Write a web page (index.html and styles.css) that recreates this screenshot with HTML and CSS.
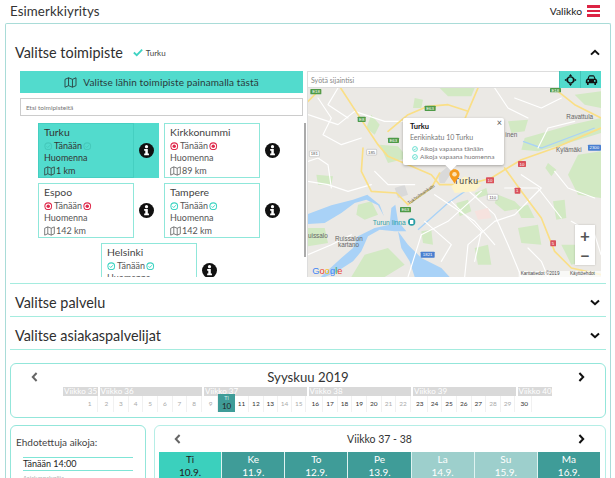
FILE: index.html
```html
<!DOCTYPE html>
<html lang="fi">
<head>
<meta charset="utf-8">
<title>Esimerkkiyritys</title>
<link rel="stylesheet" href="styles.css">
</head>
<body>
<svg class="defs" width="0" height="0" aria-hidden="true">
  <defs>
    <symbol id="map-i" viewBox="0 0 16 14"><path d="M1 3 5.500 1 10.500 3 15 1V11L10.500 13 5.500 11 1 13ZM5.500 1V11M10.500 3V13" fill="none" stroke="currentColor" stroke-width="1.100" stroke-linejoin="round"/></symbol>
    <symbol id="ok" viewBox="0 0 12 12"><circle cx="6" cy="6" r="4.800" fill="none" stroke="currentColor" stroke-width="1.500"/><path d="M3.600 6.100 5.300 7.800 8.400 4.500" fill="none" stroke="currentColor" stroke-width="1.400"/></symbol>
    <symbol id="no" viewBox="0 0 12 12"><circle cx="6" cy="6" r="4.800" fill="none" stroke="currentColor" stroke-width="1.500"/><circle cx="6" cy="6" r="2.400" fill="currentColor"/></symbol>
    <symbol id="info" viewBox="0 0 16 16"><circle cx="8" cy="8" r="8" fill="#111"/><circle cx="8" cy="3.900" r="1.700" fill="#fff"/><path d="M5.500 6.500H9.400V11.300H10.600V13H5.500V11.300H6.700V8.200H5.500Z" fill="#fff"/></symbol>
    <symbol id="chev-up" viewBox="0 0 10 7"><path d="M1 5.600 5 1.800 9 5.600" fill="none" stroke="currentColor" stroke-width="2"/></symbol>
    <symbol id="chev-down" viewBox="0 0 10 7"><path d="M1 1.400 5 5.200 9 1.400" fill="none" stroke="currentColor" stroke-width="2"/></symbol>
    <symbol id="chev-left" viewBox="0 0 7 10"><path d="M5.600 1 1.800 5 5.600 9" fill="none" stroke="currentColor" stroke-width="2"/></symbol>
    <symbol id="chev-right" viewBox="0 0 7 10"><path d="M1.400 1 5.200 5 1.400 9" fill="none" stroke="currentColor" stroke-width="2"/></symbol>
  </defs>
</svg>

<header class="topbar">
  <span class="brand">Esimerkkiyritys</span>
  <span class="menu">Valikko<span class="burger"><i></i><i></i><i></i></span></span>
</header>

<main class="frame">
  <section class="sec-open">
    <div class="sec-head">
      <h2>Valitse toimipiste</h2>
      <svg class="check" viewBox="0 0 12 10"><path d="M1 5 4.500 8.200 11 1.500" fill="none" stroke="#3fd3c3" stroke-width="2.200"/></svg>
      <span class="picked">Turku</span>
      <svg class="chev"><use href="#chev-up"/></svg>
    </div>
    <div class="picker">
      <div class="left">
        <div class="nearest"><svg class="nearest-i"><use href="#map-i"/></svg>Valitse lähin toimipiste painamalla tästä</div>
        <div class="search">Etsi toimipisteitä</div>
        <div class="list">
          <div class="loc selected">
            <div class="card"><b>Turku</b><p><svg class="st dim"><use href="#ok"/></svg><span>Tänään</span><svg class="st dim"><use href="#ok"/></svg></p><p>Huomenna</p><p><svg class="mp"><use href="#map-i"/></svg>1 km</p></div>
            <div class="info"><svg><use href="#info"/></svg></div>
          </div>
          <div class="loc">
            <div class="card"><b>Kirkkonummi</b><p><svg class="st red"><use href="#no"/></svg><span>Tänään</span><svg class="st red"><use href="#no"/></svg></p><p>Huomenna</p><p><svg class="mp"><use href="#map-i"/></svg>89 km</p></div>
            <div class="info"><svg><use href="#info"/></svg></div>
          </div>
          <div class="loc">
            <div class="card"><b>Espoo</b><p><svg class="st red"><use href="#no"/></svg><span>Tänään</span><svg class="st red"><use href="#no"/></svg></p><p>Huomenna</p><p><svg class="mp"><use href="#map-i"/></svg>142 km</p></div>
            <div class="info"><svg><use href="#info"/></svg></div>
          </div>
          <div class="loc">
            <div class="card"><b>Tampere</b><p><svg class="st grn"><use href="#ok"/></svg><span>Tänään</span><svg class="st grn"><use href="#ok"/></svg></p><p>Huomenna</p><p><svg class="mp"><use href="#map-i"/></svg>142 km</p></div>
            <div class="info"><svg><use href="#info"/></svg></div>
          </div>
          <div class="loc last">
            <div class="card"><b>Helsinki</b><p><svg class="st grn"><use href="#ok"/></svg><span>Tänään</span><svg class="st grn"><use href="#ok"/></svg></p><p>Huomenna</p><p><svg class="mp"><use href="#map-i"/></svg>142 km</p></div>
            <div class="info"><svg><use href="#info"/></svg></div>
          </div>
        </div>
      </div>
      <div class="scrollbar"></div>
      <div class="right">
        <div class="mapbar">
          <span class="addr">Syötä sijaintisi</span>
          <span class="mapbtn"><svg viewBox="0 0 14 14"><circle cx="7" cy="7" r="3.600" fill="none" stroke="#111" stroke-width="1.600"/><path d="M7 0 9 2.500H5ZM7 14 5 11.500H9ZM0 7 2.500 5V9ZM14 7 11.500 9V5Z" fill="#111"/></svg></span>
          <span class="mapbtn"><svg viewBox="0 0 16 14"><path d="M3 5.500 4.500 2Q4.800 1 6 1H10Q11.200 1 11.500 2L13 5.500Q15 6 15 8V11H13.500V13H11.500V11H4.500V13H2.500V11H1V8Q1 6 3 5.500Z" fill="#111"/><path d="M4.500 5.500 5.500 2.800H10.500L11.500 5.500Z" fill="#52dbcd"/><circle cx="4" cy="8.200" r="1.100" fill="#52dbcd"/><circle cx="12" cy="8.200" r="1.100" fill="#52dbcd"/></svg></span>
        </div>
        <div class="map">
          <svg class="mapart" viewBox="0 0 879 567" preserveAspectRatio="none">
            <rect width="879" height="567" fill="#ebe9e5"/>
            <g fill="#d2e9c3">
              <path d="M320 30 345 35 340 60 315 60Z"/>
              <path d="M395 0H500L490 25 420 25Z"/>
              <path d="M190 80 215 110 200 140 175 120Z"/>
              <path d="M215 170 270 175 300 210 240 225Z"/>
              <path d="M600 100 660 95 650 130 610 135Z"/>
              <path d="M650 150 790 110 879 90V135L780 165 690 190 640 185Z"/>
              <path d="M800 20 879 10V60L830 50Z"/>
              <path d="M720 225 745 245 730 265 712 240Z"/>
              <path d="M810 200 879 190V330L810 320 780 260Z"/>
              <path d="M570 320 620 340 640 360 590 370 560 345Z"/>
              <path d="M150 350 190 340 210 380 170 395 145 380Z"/>
              <path d="M445 345 480 335 490 370 455 385Z"/>
              <path d="M500 315 535 300 540 320 510 330Z"/>
              <path d="M630 420 690 410 700 470 640 465Z"/>
              <path d="M170 500 240 480 290 530 230 567H130Z"/>
              <path d="M0 420 50 420 60 465 0 475Z"/>
              <path d="M500 480 540 470 550 530 510 530Z"/>
              <path d="M625 360 660 350 680 390 640 390Z"/>
              <path d="M735 340 770 335 775 390 745 395Z"/>
              <path d="M25 260 75 265 70 290 30 290Z"/>
              <path d="M340 430 370 425 375 470 345 465Z"/>
              <path d="M760 470 800 470 830 520 790 530Z"/>
            </g>
            <path d="M390 260 420 235 440 240 410 285 395 285ZM260 300 290 290 300 320 270 330Z" fill="#d9d9d9"/>
            <g fill="#a9d2f7">
              <path d="M0 378 70 352 135 335 178 320 215 350 228 385 210 352 175 335 140 345 100 375 50 405 0 408Z"/>
              <path d="M250 360 262 350 270 400 295 430 260 430 215 425 180 445 160 490 135 520 80 555 50 567H38L100 510 135 480 150 445 200 420 245 410Z"/>
              <path d="M270 430 300 470 340 510 400 540 425 567H320L305 520 280 480Z"/>
            </g>
            <path fill="none" stroke="#a9d2f7" stroke-width="4" d="M330 425 420 345 500 290M645 160 700 180 780 150 860 120"/>
            <g fill="none" stroke="#fff" stroke-width="3.500" stroke-linecap="round" stroke-linejoin="round">
              <path d="M0 80 90 110 140 70 230 100 300 100"/>
              <path d="M560 0 600 60 660 90M440 270 560 380 600 470 640 567"/>
              <path d="M520 310 420 400 340 440 300 567M590 300 690 300 760 390"/>
              <path d="M0 280 60 290 120 310 190 290M380 320 500 400 560 470"/>
              <path d="M800 100 720 120 690 180M0 220 30 210 60 230 70 300"/>
              <path d="M560 400 480 470 470 567M740 250 780 300 860 330"/>
              <path d="M90 0 60 50 120 90M660 480 700 520 720 567"/>
              <path d="M30 30 70 90 45 140 100 170 160 150M620 30 700 60 760 30"/>
              <path d="M430 340 520 430 500 520M350 400 430 470 400 520"/>
              <path d="M200 250 240 290 320 290M0 500 70 470 130 440"/>
              <path d="M640 260 700 300 620 380 560 400M790 400 860 440 879 500"/>
            </g>
            <g fill="none" stroke="#fadf86" stroke-width="5" stroke-linecap="round" stroke-linejoin="round">
              <path d="M98 0 150 80 210 170 240 205 300 230 370 260 395 290 440 290"/>
              <path d="M0 40 30 10"/>
              <path d="M240 130 300 80 360 55 420 50 480 70"/>
              <path d="M510 0 480 70 455 130"/>
              <path d="M165 180 160 250 190 310 265 315 300 350"/>
              <path d="M300 350 370 300 395 255"/>
              <path d="M460 295 550 270 640 215 740 180 879 120"/>
              <path d="M590 240 640 310 700 390 740 490 790 540 879 560"/>
              <path d="M750 10 800 50 879 90"/>
            </g>
            <path d="M430 295 470 265 520 290 500 310 440 315Z" fill="#fdf3c9"/>
            <path d="M500 370 540 360 550 390 510 395Z" fill="#f6e2de"/>
            <g fill="#4e9a47">
              <rect x="7" y="3" width="33" height="16" rx="2"/><rect x="149" y="86" width="24" height="16" rx="2"/><rect x="350" y="53" width="33" height="16" rx="2"/><rect x="240" y="149" width="33" height="16" rx="2"/><rect x="276" y="357" width="33" height="16" rx="2"/><rect x="726" y="0" width="33" height="13" rx="2"/>
            </g>
            <g font-family="'Liberation Sans',sans-serif" font-size="13" fill="#fff" text-anchor="middle">
              <text x="24" y="16">E18</text><text x="161" y="99">E8</text><text x="366" y="66">E63</text><text x="256" y="162">E63</text><text x="292" y="370">E63</text><text x="742" y="11">E18</text>
            </g>
            <g fill="#fff" stroke="#aaa" stroke-width="1.500"><rect x="176" y="184" width="30" height="17" rx="2"/><rect x="4" y="189" width="30" height="17" rx="2"/><rect x="538" y="319" width="32" height="17" rx="2"/></g>
            <g font-family="'Liberation Sans',sans-serif" font-size="13" fill="#555" text-anchor="middle"><text x="191" y="197">185</text><text x="19" y="202">181</text><text x="554" y="332">110</text></g>
            <g fill="#d9515c"><rect x="630" y="219" width="24" height="18" rx="2"/><rect x="534" y="268" width="24" height="18" rx="2"/><rect x="620" y="299" width="17" height="18" rx="2"/><rect x="727" y="457" width="17" height="18" rx="2"/></g>
            <g fill="#4a7fd0"><rect x="840" y="170" width="39" height="18" rx="2"/><rect x="338" y="491" width="42" height="18" rx="2"/></g>
            <g font-family="'Liberation Sans',sans-serif" font-size="13" fill="#fff" text-anchor="middle"><text x="642" y="233">10</text><text x="546" y="282">10</text><text x="628" y="313">1</text><text x="735" y="471">5</text><text x="859" y="184">2300</text><text x="359" y="505">1821</text></g>
            <g font-family="'Liberation Sans',sans-serif" font-size="19" fill="#666">
              <text x="775" y="93">Ravattula</text><text x="744" y="192">Kylämäki</text><text x="592" y="147">inen</text><text x="0" y="449">uissalo</text>
              <text x="81" y="458">Ruissalon</text><text x="90" y="478">kartano</text>
            </g>
            <text x="303" y="350" font-family="'Liberation Sans',sans-serif" font-size="14" fill="#555" transform="rotate(-35 303 350)">Tukholmankatu</text>
            <text x="194" y="410" font-family="'Liberation Sans',sans-serif" font-size="20" fill="#2a9fa6">Turun linna</text>
            <circle cx="311" cy="402" r="11" fill="#2a9fa6"/><rect x="306" y="396" width="10" height="12" fill="#fff"/>
            <text x="437" y="288" font-family="'Liberation Sans',sans-serif" font-size="26" letter-spacing="2" fill="#444">Turku</text>
            <text x="13" y="558" font-family="'Liberation Sans',sans-serif" font-size="28"><tspan fill="#4285f4">G</tspan><tspan fill="#ea4335">o</tspan><tspan fill="#fbbc05">o</tspan><tspan fill="#4285f4">g</tspan><tspan fill="#34a853">l</tspan><tspan fill="#ea4335">e</tspan></text>
            <rect x="632" y="549" width="247" height="18" fill="#fff" opacity=".7"/>
            <text x="638" y="562" font-family="'Liberation Sans',sans-serif" font-size="14" fill="#444">Karttatiedot ©2019</text>
            <text x="786" y="562" font-family="'Liberation Sans',sans-serif" font-size="14" fill="#444">Käyttöehdot</text>
          </svg>
          <svg class="pin" viewBox="0 0 12 16"><path d="M6 0C2.700 0 .5 2.400.5 5.500.5 9 4.500 12 6 16 7.500 12 11.500 9 11.500 5.500 11.500 2.400 9.300 0 6 0Z" fill="#f59a1b"/><circle cx="6" cy="5.500" r="2.500" fill="#fde3b4"/></svg>
          <div class="popup">
            <span class="close">×</span>
            <strong>Turku</strong>
            <p class="street">Eerikinkatu 10 Turku</p>
            <p class="free"><svg class="st grn"><use href="#ok"/></svg>Aikoja vapaana tänään</p>
            <p class="free"><svg class="st grn"><use href="#ok"/></svg>Aikoja vapaana huomenna</p>
          </div>
          <div class="zoomctl"><span>+</span><span>−</span></div>
        </div>
      </div>
    </div>
  </section>

  <section class="sec"><h2>Valitse palvelu</h2><svg class="chev"><use href="#chev-down"/></svg></section>
  <section class="sec"><h2>Valitse asiakaspalvelijat</h2><svg class="chev"><use href="#chev-down"/></svg></section>

  <section class="month box">
    <div class="month-head">
      <svg class="nav-l"><use href="#chev-left"/></svg>
      <span>Syyskuu 2019</span>
      <svg class="nav-r"><use href="#chev-right"/></svg>
    </div>
    <div class="weeks">
      <div class="week w1 end"><div class="wk">Viikko 35</div><div class="days"><i class="off">1</i></div></div>
      <div class="week"><div class="wk">Viikko 36</div><div class="days"><i class="off">2</i><i class="off">3</i><i class="off">4</i><i class="off">5</i><i class="off">6</i><i class="off">7</i><i class="off">8</i></div></div>
      <div class="week"><div class="wk">Viikko 37</div><div class="days"><i class="off">9</i><i class="today"><small>Ti</small>10</i><i>11</i><i>12</i><i>13</i><i class="off">14</i><i class="off">15</i></div></div>
      <div class="week"><div class="wk">Viikko 38</div><div class="days"><i>16</i><i>17</i><i>18</i><i>19</i><i>20</i><i class="off">21</i><i class="off">22</i></div></div>
      <div class="week"><div class="wk">Viikko 39</div><div class="days"><i>23</i><i>24</i><i>25</i><i>26</i><i>27</i><i class="off">28</i><i class="off">29</i></div></div>
      <div class="week w1"><div class="wk">Viikko 40</div><div class="days"><i>30</i></div></div>
    </div>
  </section>

  <div class="lower">
    <aside class="box suggest">
      <h3>Ehdotettuja aikoja:</h3>
      <div class="slot">Tänään 14:00</div>
      <div class="slot-sub">Asiakaspalvelija</div>
    </aside>
    <section class="box agenda">
      <div class="agenda-head">
        <svg class="nav-l"><use href="#chev-left"/></svg>
        <span>Viikko 37 - 38</span>
        <svg class="nav-r"><use href="#chev-right"/></svg>
      </div>
      <div class="cols">
        <div class="col now">Ti<br>10.9.</div>
        <div class="col">Ke<br>11.9.</div>
        <div class="col">To<br>12.9.</div>
        <div class="col">Pe<br>13.9.</div>
        <div class="col wkend">La<br>14.9.</div>
        <div class="col wkend">Su<br>15.9.</div>
        <div class="col">Ma<br>16.9.</div>
      </div>
    </section>
  </div>
</main>
</body>
</html>
```

FILE: styles.css
```css
* { box-sizing: border-box; }
html, body { height: 100%; }
body {
  margin: 0;
  overflow: hidden;
  background: #fff;
  color: #333;
  font-family: Lato, "Liberation Sans", sans-serif;
}
h2, h3, p { margin: 0; font-weight: 400; }
.defs { display: block; height: 0; }

.topbar {
  height: 22px;
  padding: 0 15px 0 10px;
  display: flex;
  align-items: center;
  justify-content: space-between;
}
.brand { font-size: 13.300px; letter-spacing: .1px; }
.menu { display: flex; align-items: center; gap: 5px; font-size: 10.300px; color: #222; }
.burger { display: flex; flex-direction: column; gap: 2px; width: 13px; }
.burger i { display: block; height: 2.500px; background: #dc2344; }

.frame {
  margin: 1px 4px 0 5px;
  border: 1.500px solid #a9dcd8;
  border-bottom: 0;
  border-radius: 2px 2px 0 0;
  padding: 0 4px;
  height: 460px;
  overflow: hidden;
}

.sec-open { border-bottom: 1.500px solid #a5ecdf; height: 260px; }
.sec-head {
  height: 47px;
  padding: 10px 0 0 5px;
  display: flex;
  align-items: center;
}
.sec-head h2, .sec h2 { font-size: 14.400px; color: #2f2f2f; }
.check { width: 10px; height: 9px; margin-left: 10px; }
.picked { font-size: 8px; margin-left: 3px; color: #444; }
.chev { width: 10px; height: 7px; color: #111; margin-left: auto; margin-right: 6px; }

.picker { display: flex; padding-left: 10px; height: 206px; }
.left { width: 283px; display: flex; flex-direction: column; }
.nearest {
  height: 22px;
  background: #52dbcd;
  font-size: 10px;
  color: #2a3a3a;
  display: flex;
  align-items: center;
  justify-content: center;
  gap: 6px;
  letter-spacing: .1px;
}
.nearest-i { width: 13px; height: 11px; color: #2a3a3a; }
.search {
  margin-top: 5px;
  height: 18px;
  border: 1px solid #ccc;
  font-size: 6.500px;
  color: #777;
  padding: 0 5px;
  display: flex;
  align-items: center;
}
.list {
  margin-top: 7px;
  height: 154px;
  overflow: hidden;
  display: flex;
  flex-wrap: wrap;
  align-content: flex-start;
  justify-content: center;
  gap: 5px;
  padding-left: 0;
}
.loc { display: flex; height: 55px; width: 121px; }
.loc.last { margin: 0 auto; }
.card {
  width: 96px;
  height: 55px;
  border: 1px solid #8fe7da;
  padding: 1px 5px;
  font-size: 9px;
  color: #555;
  line-height: 12px;
}
.card b { display: block; font-weight: 400; font-size: 10.400px; line-height: 15px; color: #444; }
.card p { display: flex; align-items: center; height: 12.300px; }
.card span { margin: 0 1.500px; }
.info { width: 25px; display: flex; align-items: center; justify-content: center; }
.info svg { width: 15px; height: 15px; }
.st { width: 8.500px; height: 8.500px; flex: none; }
.st.red { color: #df2a4c; }
.st.grn { color: #3dd4c2; }
.st.dim { color: #45c9bb; }
.mp { width: 11px; height: 10px; margin-right: 1px; color: #555; }
.selected { background: #52dbcd; }
.selected .card { border-color: #45cfc1; color: #333; }
.selected .card b { color: #333; }
.selected .mp { color: #333; }

.scrollbar { width: 2px; height: 134px; margin: 52px 0 0 1px; background: #aaa; }
.right { width: 294px; display: flex; flex-direction: column; height: 206px; margin-left: 1px; }
.mapbar { height: 17px; display: flex; border: 1px solid #ddd; border-right: 0; background: #fff; }
.addr { flex: 1; font-size: 7px; color: #888; padding-left: 3px; align-self: center; }
.mapbtn { width: 21px; margin: -1px 0; background: #52dbcd; display: flex; align-items: center; justify-content: center; border-left: 1px solid #42c4b7; }
.mapbtn svg { width: 13px; height: 12px; }
.map { position: relative; height: 189px; overflow: hidden; border-left: 1px solid #ddd; }
.mapart { display: block; width: 293px; height: 189px; }
.pin { position: absolute; left: 141px; top: 81px; width: 11px; height: 15px; }
.popup {
  position: absolute;
  left: 95px;
  top: 30px;
  width: 101px;
  height: 47px;
  background: #fff;
  border-radius: 2px;
  box-shadow: 0 1px 3px rgba(0,0,0,.3);
  padding: 4px 7px;
  font-size: 7px;
  color: #777;
  line-height: 8px;
}
.popup::after {
  content: "";
  position: absolute;
  left: 44px;
  bottom: -4px;
  width: 8px;
  height: 8px;
  background: #fff;
  transform: rotate(45deg);
}
.popup strong { display: block; color: #111; font-size: 7.500px; font-weight: 700; line-height: 9px; }
.street { font-size: 7px; line-height: 12px; margin-bottom: 2px; }
.free { display: flex; align-items: center; gap: 2px; white-space: nowrap; margin-left: 2px; height: 8px; font-size: 6.500px; }
.free .st { width: 6px; height: 6px; }
.close { position: absolute; right: 2px; top: 0; font-size: 9px; color: #555; line-height: 10px; }
.zoomctl {
  position: absolute;
  left: 267px;
  top: 137px;
  width: 20px;
  height: 40px;
  background: #fff;
  display: flex;
  flex-direction: column;
  box-shadow: 0 0 2px rgba(0,0,0,.2);
}
.zoomctl span { height: 20px; display: flex; align-items: center; justify-content: center; font-size: 17px; font-weight: 700; color: #555; line-height: 1; }

.sec {
  height: 33px;
  border-bottom: 1.500px solid #a5ecdf;
  display: flex;
  align-items: center;
  padding: 5px 0 0 5px;
}
.box { border: 1px solid #93e6da; border-radius: 6px; }
.month { margin-top: 13px; height: 55px; overflow: hidden; }
.month-head {
  height: 22px;
  display: flex;
  align-items: center;
  justify-content: center;
  position: relative;
  font-size: 13.200px;
  color: #333;
  padding-top: 3px;
}
.nav-l, .nav-r { position: absolute; width: 7px; height: 10px; top: 8px; }
.nav-l { left: 20px; color: #666; }
.nav-r { right: 20px; color: #111; }
.weeks { display: flex; gap: 2px; padding-left: 52px; margin-top: 1px; }
.week { width: 102.500px; }
.week.w1 { width: 34.500px; }
.wk { height: 9px; background: #d9d9d9; color: #fff; font-size: 8px; line-height: 9px; padding-left: 1px; white-space: nowrap; overflow: hidden; }
.days { display: flex; height: 16px; }
.week.end .days { justify-content: flex-end; }
.days i {
  width: 14.640px;
  font-style: normal;
  font-size: 6.500px;
  color: #333;
  text-align: center;
  line-height: 16px;
  border-right: 1px solid #f1f1f1;
}
.days i.off { color: #aaa; }
.days i.today {
  width: 17px;
  margin: -2px 0 0;
  height: 18px;
  background: #3f9c98;
  color: #222;
  font-size: 8px;
  line-height: 8px;
  padding-top: 1px;
  border: 0;
}
.today small { display: block; font-size: 5.500px; line-height: 7px; color: #d8f2ef; }

.lower { display: flex; gap: 8px; margin-top: 7px; align-items: flex-start; }
.suggest { width: 136px; height: 80px; padding: 10px 5px 0; }
.suggest h3 { font-size: 10px; line-height: 12px; color: #444; margin-bottom: 9px; }
.slot { margin: 0 7px; border-top: 1px solid #7fe5d6; border-bottom: 1px solid #7fe5d6; height: 14px; font-size: 9px; line-height: 12px; color: #222; }
.slot-sub { margin: 3px 0 0 7px; font-size: 6px; color: #aaa; }
.agenda { flex: 1; height: 80px; padding: 0 5px 0 4px; position: relative; border-color: #b5eee6; }
.agenda-head {
  height: 26px;
  display: flex;
  align-items: center;
  justify-content: center;
  font-size: 10.500px;
  color: #333;
}
.agenda .nav-l { left: 19px; }
.agenda .nav-r { right: 20px; }
.cols { display: flex; }
.col {
  flex: 1;
  text-align: center;
  color: #fff;
  background: #3f9c98;
  border-right: 1px solid #dff3f1;
  font-size: 10px;
  line-height: 12.500px;
  padding-top: 1px;
  height: 40px;
}
.col.now { background: #3bd0bd; color: #222; }
.col.wkend { background: #9dcfcc; }
.col:last-child { border-right: 0; }
```
